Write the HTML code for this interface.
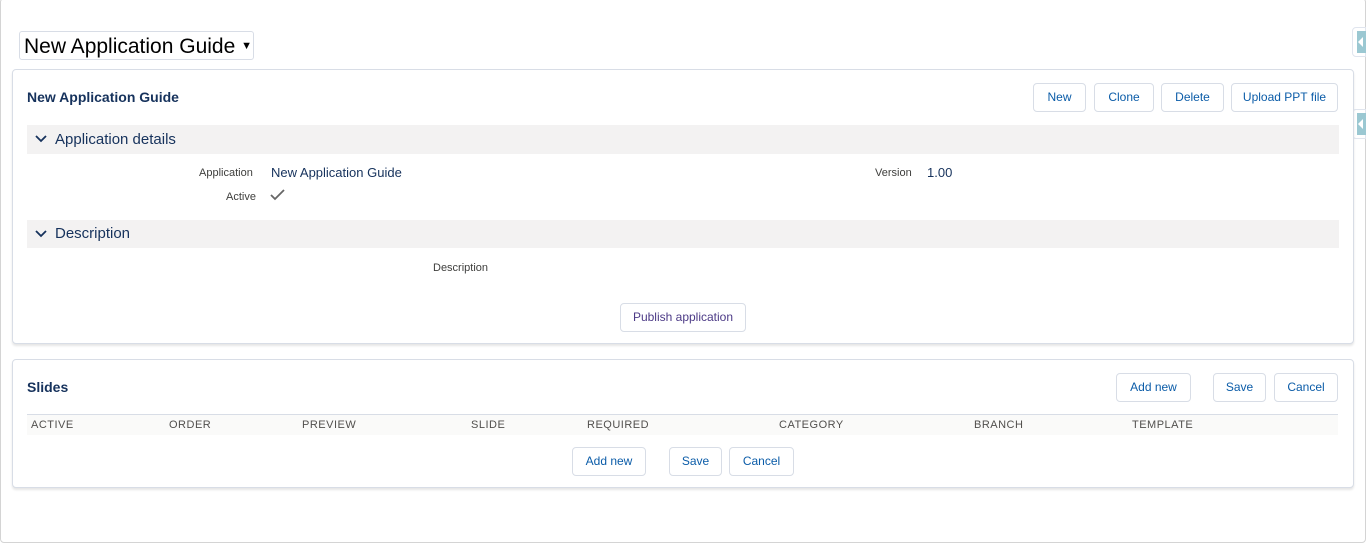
<!DOCTYPE html>
<html><head><style>
*{box-sizing:border-box;margin:0;padding:0}
body{width:1366px;height:543px;background:#fff;font-family:"Liberation Sans",sans-serif;position:relative;overflow:hidden}
.frame{position:absolute;left:0;top:-2px;width:1366px;height:545px;border:1px solid #d4d4d4;border-radius:4px}
.abs{position:absolute}
.card{position:absolute;border:1px solid #d8dde6;border-radius:4px;background:#fff;box-shadow:0 2px 2px rgba(0,0,0,.1)}
.btn{position:absolute;height:29px;border:1px solid #d8dde6;border-radius:4px;background:#fff;color:#0b5ca8;font-size:12px;line-height:27px;text-align:center}
.sec{position:absolute;left:27px;width:1312px;background:#f3f2f2;color:#16325c;font-size:15px}
.lbl{position:absolute;font-size:11px;color:#3e3e3c}
.th{position:absolute;top:419px;font-size:11px;color:#514f4d;letter-spacing:.5px}
.tab{position:absolute;left:1352px;width:14px;height:30px;background:#fff;border:1px solid #e0e5ee;border-radius:4px 0 0 4px}
.tab i{position:absolute;left:4px;top:3px;width:10px;height:22px;background:#9bc8d2}
.tab i:after{content:"";position:absolute;left:1px;top:6px;border-right:5px solid #fff;border-top:5px solid transparent;border-bottom:5px solid transparent}
</style></head><body>
<div class="frame"></div>
<div class="abs" style="left:19px;top:31px;width:235px;height:29px;border:1px solid #d8dde6;border-radius:3px;font-size:21px;color:#000;line-height:28px;padding-left:4px;white-space:nowrap">New Application Guide <span style="font-size:11px;vertical-align:4px">▼</span></div>
<div class="tab" style="top:27px"><i></i></div>
<div class="tab" style="top:109px"><i></i></div>
<div class="card" style="left:12px;top:69px;width:1342px;height:275px"></div>
<div class="abs" style="left:27px;top:89px;font-size:14px;font-weight:bold;color:#16325c">New Application Guide</div>
<div class="btn" style="left:1033px;top:83px;width:53px">New</div>
<div class="btn" style="left:1094px;top:83px;width:60px">Clone</div>
<div class="btn" style="left:1161px;top:83px;width:63px">Delete</div>
<div class="btn" style="left:1231px;top:83px;width:107px">Upload PPT file</div>
<div class="sec" style="top:125px;height:29px;line-height:29px;padding-left:28px">Application details</div>
<svg class="abs" style="left:35px;top:134px" width="12" height="10"><path d="M1 2l5 5 5-5" stroke="#16325c" stroke-width="1.8" fill="none"/></svg>
<div class="lbl" style="left:199px;top:167px">Application</div>
<div class="abs" style="left:271px;top:165px;font-size:13px;color:#16325c">New Application Guide</div>
<div class="lbl" style="left:226px;top:191px">Active</div>
<svg class="abs" style="left:270px;top:189px" width="16" height="12"><path d="M1 6l4 4 9-9" stroke="#666" stroke-width="1.8" fill="none"/></svg>
<div class="lbl" style="left:875px;top:167px">Version</div>
<div class="abs" style="left:927px;top:165px;font-size:13px;color:#16325c">1.00</div>
<div class="sec" style="top:220px;height:28px;line-height:28px;padding-left:28px">Description</div>
<svg class="abs" style="left:35px;top:229px" width="12" height="10"><path d="M1 2l5 5 5-5" stroke="#16325c" stroke-width="1.8" fill="none"/></svg>
<div class="lbl" style="left:433px;top:262px">Description</div>
<div class="btn" style="left:620px;top:303px;width:126px;color:#4c3a86">Publish application</div>
<div class="card" style="left:12px;top:359px;width:1342px;height:129px"></div>
<div class="abs" style="left:27px;top:379px;font-size:14px;font-weight:bold;color:#16325c">Slides</div>
<div class="btn" style="left:1116px;top:373px;width:75px">Add new</div>
<div class="btn" style="left:1213px;top:373px;width:53px">Save</div>
<div class="btn" style="left:1274px;top:373px;width:64px">Cancel</div>
<div class="abs" style="left:27px;top:414px;width:1311px;height:21px;background:#fafaf9;border-top:1px solid #d8dde6"></div>
<div class="th" style="left:31px">ACTIVE</div>
<div class="th" style="left:169px">ORDER</div>
<div class="th" style="left:302px">PREVIEW</div>
<div class="th" style="left:471px">SLIDE</div>
<div class="th" style="left:587px">REQUIRED</div>
<div class="th" style="left:779px">CATEGORY</div>
<div class="th" style="left:974px">BRANCH</div>
<div class="th" style="left:1132px">TEMPLATE</div>
<div class="btn" style="left:572px;top:447px;width:74px">Add new</div>
<div class="btn" style="left:669px;top:447px;width:53px">Save</div>
<div class="btn" style="left:729px;top:447px;width:65px">Cancel</div>
</body></html>
